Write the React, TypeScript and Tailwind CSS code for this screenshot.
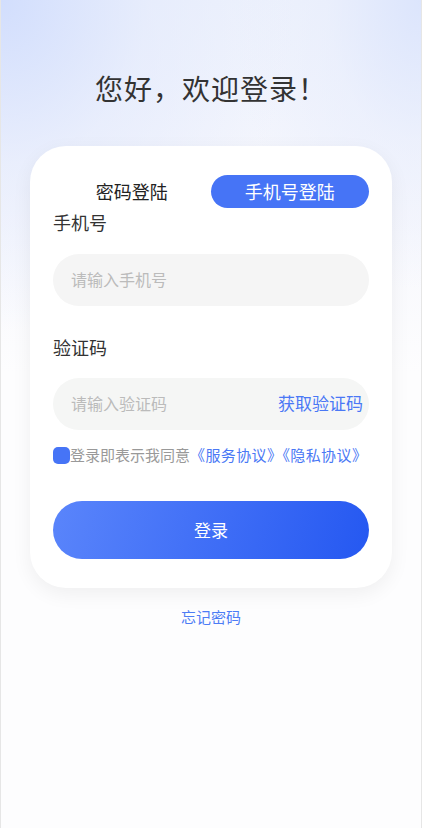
import { useState } from 'react';

const font = { fontFamily: '"Noto Sans CJK SC", "Noto Sans", sans-serif' };

export default function App() {
  const [tab, setTab] = useState<'pwd' | 'phone'>('phone');
  const [agree, setAgree] = useState(true);

  return (
    <div
      style={font}
      className="w-[422px] h-[828px] border-x border-[#e6e6e6] bg-[radial-gradient(ellipse_70%_40%_at_0%_0%,#d2defd_0%,rgba(226,233,252,0.6)_50%,rgba(255,255,255,0)_100%),radial-gradient(ellipse_45%_35%_at_100%_0%,#dce5fc_0%,rgba(230,236,252,0.5)_50%,rgba(255,255,255,0)_100%),linear-gradient(180deg,#eef2fc_0%,#f6f7fd_25%,#fdfdfe_45%,#fdfdfe_100%)] flex flex-col items-center overflow-hidden"
    >
      {/* 标题 */}
      <h1 className="mt-[68px] text-[28px] leading-[40px] text-[#333] tracking-[1px]">您好，欢迎登录！</h1>

      {/* 卡片 */}
      <div className="mt-[38px] w-[362px] bg-white rounded-[36px] shadow-[0_6px_20px_rgba(0,0,0,0.06)] px-[23px] pt-[29px] pb-[29px]">
        <div className="flex items-center h-[33px]">
          <button
            onClick={() => setTab('pwd')}
            className={`w-[158px] h-[33px] rounded-full text-[18px] ${tab === 'pwd' ? 'bg-[#4674f6] text-white' : 'text-[#222]'}`}
          >
            密码登陆
          </button>
          <button
            onClick={() => setTab('phone')}
            className={`w-[159px] h-[33px] rounded-full text-[18px] ${tab === 'phone' ? 'bg-[#4674f6] text-white' : 'text-[#222]'}`}
          >
            手机号登陆
          </button>
        </div>

        <div className="mt-[1px] text-[18px] leading-[26px] text-[#333]">手机号</div>
        <div className="mt-[19px] h-[52px] rounded-full bg-[#f5f5f5] flex items-center px-[18px]">
          <input
            placeholder="请输入手机号"
            className="flex-1 bg-transparent outline-none text-[16px] leading-[20px] text-[#333] placeholder:text-[#bbb] -mt-[2px]"
          />
        </div>

        <div className="mt-[28px] text-[18px] leading-[26px] text-[#333]">验证码</div>
        <div className="mt-[18px] h-[52px] rounded-full bg-[#f5f6f5] flex items-center pl-[18px] pr-[6px]">
          <input
            placeholder="请输入验证码"
            className="flex-1 min-w-0 bg-transparent outline-none text-[16px] leading-[20px] text-[#333] placeholder:text-[#bbb] -mt-[2px]"
          />
          <span className="text-[17px] text-[#4a78f5] -mt-[2px]">获取验证码</span>
        </div>

        {/* 协议 */}
        <div className="mt-[14px] flex items-center text-[15px] leading-[22px]">
          <button
            onClick={() => setAgree(!agree)}
            className={`w-[17px] h-[17px] rounded-[5px] shrink-0 ${agree ? 'bg-[#4674f6]' : 'border border-[#ccc]'}`}
          />
          <span className="text-[#999]">登录即表示我同意</span>
          <span className="text-[#4a78f5] tracking-[0.4px]">《服务协议》《隐私协议》</span>
        </div>

        <button className="mt-[35px] w-full h-[58px] rounded-full bg-[linear-gradient(105deg,#5a85fb_0%,#3d6cf6_55%,#2558f1_100%)] text-white text-[17px]">
          登录
        </button>
      </div>

      <div className="mt-[18px] text-[15px] text-[#4d7cf5]">忘记密码</div>
    </div>
  );
}
